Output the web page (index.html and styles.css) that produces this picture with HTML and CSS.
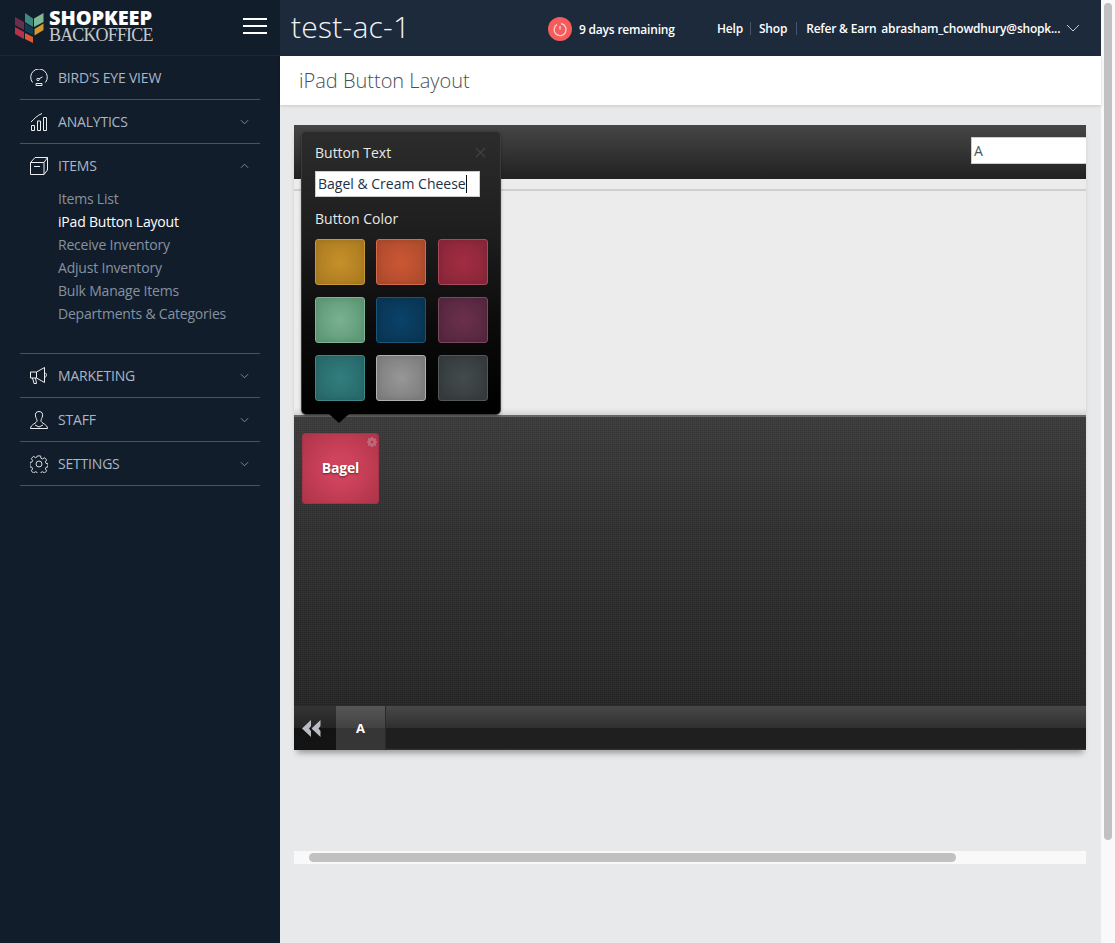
FILE: index.html
```html
<!DOCTYPE html>
<html lang="en">
<head>
<meta charset="utf-8">
<title>iPad Button Layout</title>
<link rel="stylesheet" href="styles.css">
</head>
<body>
<div class="app">
  <aside class="sidebar">
    <div class="brand">
      <svg class="brand-mark" viewBox="0 0 29 31" width="29" height="31">
        <path d="M10 1L18 6.500V15L10 10z" fill="#3f8a80"/>
        <path d="M19 6.500L28.500 1V10L19 15z" fill="#7fb894"/>
        <path d="M0 5L9 10V18L0 13z" fill="#6b2f4c"/>
        <path d="M19.500 17L28.500 11.500V18L19.500 23.500z" fill="#d2982b"/>
        <path d="M0 15L9 20V27L0 22z" fill="#b8314a"/>
        <path d="M10 21L18 25V31L10 27z" fill="#dc5a34"/>
        <path d="M10 11L18 16.500V23L10 19z" fill="#123a55"/>
      </svg>
      <div class="brand-text">
        <span class="brand-top">SHOPKEEP</span>
        <span class="brand-bottom">BACKOFFICE</span>
      </div>
      <div class="burger"><i></i><i></i><i></i></div>
    </div>
    <nav class="nav">
      <div class="nav-item">
        <svg class="nav-icon" viewBox="0 0 18 18"><path d="M2.600 13.500A8.300 8.300 0 1 1 15.400 13.500M6 14.500h6v2H6zM9 10l3.500-2.200"/><circle cx="8" cy="10.500" r="1.200"/></svg>
        <span class="nav-label">BIRD'S EYE VIEW</span>
      </div>
      <div class="nav-item">
        <svg class="nav-icon" viewBox="0 0 18 18"><path d="M1.500 12.500h3v5h-3zM7.500 8h3v9.500h-3zM13.500 4.500h3v13h-3zM1 9C4 6 7 2.500 12 .5"/></svg>
        <span class="nav-label">ANALYTICS</span>
        <svg class="chev" viewBox="0 0 10 6"><path d="M1 1l4 4 4-4"/></svg>
      </div>
      <div class="nav-item nav-open">
        <svg class="nav-icon" viewBox="0 0 18 18"><path d="M.5 5.500H14V17.500H.5zM.5 5.500L5 .5H17.500V13L14 17.500M14 5.500L17.500 .5M4 9.500h6"/></svg>
        <span class="nav-label">ITEMS</span>
        <svg class="chev" viewBox="0 0 10 6"><path d="M1 5l4-4 4 4"/></svg>
      </div>
      <ul class="subnav">
        <li>Items List</li>
        <li class="current">iPad Button Layout</li>
        <li>Receive Inventory</li>
        <li>Adjust Inventory</li>
        <li>Bulk Manage Items</li>
        <li>Departments &amp; Categories</li>
      </ul>
      <div class="nav-item">
        <svg class="nav-icon" viewBox="0 0 18 18"><path d="M.5 5h6L14.500 .5v15L6.500 11h-6zM6.500 5v6M14.500 5.500c2.500 .5 2.500 4.500 0 5M2.500 11l1.500 5.500h2.500L5.500 11"/></svg>
        <span class="nav-label">MARKETING</span>
        <svg class="chev" viewBox="0 0 10 6"><path d="M1 1l4 4 4-4"/></svg>
      </div>
      <div class="nav-item">
        <svg class="nav-icon" viewBox="0 0 18 18"><path d="M9 .5C6 .5 5 2.500 5.500 5 5.800 7 7 8 7 9.800c0 2.500-6.500 3.500-6.500 7.700h17c0-4.200-6.500-5.200-6.500-7.700 0-1.800 1.200-2.800 1.500-4.800C13 2.500 12 .5 9 .5zM5 14l4 2 4-2"/></svg>
        <span class="nav-label">STAFF</span>
        <svg class="chev" viewBox="0 0 10 6"><path d="M1 1l4 4 4-4"/></svg>
      </div>
      <div class="nav-item">
        <svg class="nav-icon" viewBox="0 0 20 20"><path d="M8.300 1h3.400l.5 2.600 1.700.8 2.300-1.400 2.300 2.500-1.400 2.200.7 1.600 2.200.5v3.400l-2.200.5-.7 1.700 1.400 2.200-2.300 2.400-2.300-1.400-1.700.7-.5 2.200H8.300l-.5-2.200-1.700-.7-2.300 1.400-2.300-2.400 1.400-2.200-.7-1.700-2.200-.5V8.300l2.200-.5.7-1.600-1.400-2.200 2.300-2.500 2.300 1.400 1.700-.8z"/><circle cx="10" cy="10" r="3.300"/></svg>
        <span class="nav-label">SETTINGS</span>
        <svg class="chev" viewBox="0 0 10 6"><path d="M1 1l4 4 4-4"/></svg>
      </div>
    </nav>
  </aside>

  <div class="main">
    <header class="topbar">
      <h1 class="store">test-ac-1</h1>
      <div class="trial">
        <svg class="trial-icon" viewBox="0 0 24 24" width="24" height="24"><circle cx="12" cy="12" r="12" fill="#f65c5c"/><path d="M9 7.500a6 6 0 1 0 4-.8M12 9v3.500" fill="none" stroke="#fbd5d5" stroke-width="1.300"/></svg>
        <span>9 days remaining</span>
      </div>
      <div class="links">
        <a>Help</a><span class="pipe"></span><a>Shop</a><span class="pipe pipe-wide"></span><a>Refer &amp; Earn</a>
        <a class="account">abrasham_chowdhury@shopk...</a>
        <svg class="account-chev" viewBox="0 0 14 8"><path d="M1 1l6 6 6-6"/></svg>
      </div>
    </header>
    <div class="page-title"><h2>iPad Button Layout</h2></div>
    <div class="content">
      <section class="editor">
        <div class="toolbar"><input class="name-field" value="A" readonly></div>
        <div class="shelf"><div class="shelf-line"></div></div>
        <div class="board">
          <div class="tile">
            <span>Bagel</span>
            <svg class="tile-gear" viewBox="0 0 12 12"><path d="M5 0h2l.3 1.500 1.100.5L9.700 1.200l1.400 1.400-.8 1.300.5 1.100L12 5v2l-1.200.3-.5 1.100.8 1.300-1.400 1.400-1.300-.8-1.100.5L7 12H5l-.3-1.200-1.100-.5-1.300.8L.9 9.700l.8-1.300-.5-1.100L0 7V5l1.200-.3.5-1.100-.8-1.300 1.400-1.400 1.300.8 1.100-.5z"/><circle cx="6" cy="6" r="1.800" class="gear-hole"/></svg>
          </div>
        </div>
        <div class="tabs">
          <div class="tab-back">
            <svg viewBox="0 0 19 17" width="19" height="17"><path d="M9 0v6L7 8.500l2 2.500v6L0 8.500zM18.500 0v6l-2 2.500 2 2.500v6L9.500 8.500z" fill="#b9bcc0"/></svg>
          </div>
          <div class="tab">A</div>
        </div>
        <div class="popover">
          <svg class="pop-close" viewBox="0 0 12 12"><path d="M1 1l10 10M11 1L1 11"/></svg>
          <label class="pop-label">Button Text</label>
          <div class="pop-input">Bagel &amp; Cream Cheese<i class="caret"></i></div>
          <label class="pop-label pop-label-color">Button Color</label>
          <div class="swatches">
            <div class="swatch s-gold"></div>
            <div class="swatch s-orange"></div>
            <div class="swatch s-red"></div>
            <div class="swatch s-green"></div>
            <div class="swatch s-navy"></div>
            <div class="swatch s-plum"></div>
            <div class="swatch s-teal"></div>
            <div class="swatch s-grey"></div>
            <div class="swatch s-slate"></div>
          </div>
        </div>
      </section>
      <div class="hscroll"><div class="hthumb"></div></div>
    </div>
  </div>
  <div class="vscroll"><div class="vthumb"></div></div>
</div>
</body>
</html>
```

FILE: styles.css
```css
* { box-sizing: border-box; }
html, body { margin: 0; height: 100%; overflow: hidden; }
body { font-family: "Open Sans", sans-serif; background: #e8e9eb; }
.app { display: flex; height: 943px; width: 1115px; overflow: hidden; }

.sidebar { width: 280px; flex: none; background: #121d2b; }
.brand { height: 56px; display: flex; align-items: center; padding: 0 13px 0 15px; border-bottom: 1px solid #1c2835; }
.brand-mark { flex: none; margin-right: 5px; }
.brand-text { display: flex; flex-direction: column; gap: 2px; width: 110px; margin-bottom: 3px; }
.brand-top { font-weight: 800; font-size: 20px; line-height: 16px; color: #fff; letter-spacing: -.1px; }
.brand-bottom { font-family: "Liberation Serif", serif; font-size: 18px; line-height: 15px; color: #c3c8cc; letter-spacing: -.85px; }
.burger { margin-left: auto; margin-bottom: 3px; width: 24px; display: flex; flex-direction: column; gap: 5px; }
.burger i { display: block; height: 2px; background: #fff; }

.nav { padding: 0 20px; }
.nav-item { height: 44px; display: flex; align-items: center; padding: 0 10px; border-bottom: 1px solid #4a5360; color: #a9b6c6; font-size: 14px; letter-spacing: -.2px; }
.nav-open { border-bottom-color: transparent; }
.nav-icon { width: 18px; height: 18px; flex: none; margin-right: 10px; fill: none; stroke: #eceef0; stroke-width: 1; }
.nav-label { flex: 1; }
.chev { width: 9px; height: 6px; flex: none; margin-right: 1px; fill: none; stroke: #8b95a1; stroke-width: 1; }
.subnav { list-style: none; margin: -1px 0 0; padding: 0 0 28px 38px; border-bottom: 1px solid #4a5360; color: #8492a2; font-size: 14px; line-height: 23px; letter-spacing: -.2px; }
.subnav .current { color: #fff; }

.main { width: 821px; flex: none; display: flex; flex-direction: column; }
.topbar { height: 56px; flex: none; background: #1c2a3b; display: flex; align-items: center; color: #fff; font-size: 12px; font-weight: 600; }
.store { margin: 0 0 3px 11px; width: 257px; font-size: 30px; font-weight: 300; letter-spacing: .25px; color: #f3f4f5; }
.trial { display: flex; align-items: center; gap: 7px; width: 169px; padding-top: 2px; letter-spacing: -.2px; }
.trial-icon { flex: none; }
.links { display: flex; align-items: center; flex: 1; letter-spacing: -.2px; }
.pipe { display: block; width: 1px; height: 13px; background: #46566a; margin: 0 8px 0 7px; }
.pipe-wide { margin: 0 9px; }
.account { margin-left: 5px; }
.account-chev { width: 14px; height: 8px; margin-left: 6px; fill: none; stroke: #c4cad1; stroke-width: 1; }

.page-title { height: 49px; flex: none; background: #fff; box-shadow: 0 1px 3px rgba(0,0,0,.14); display: flex; align-items: center; padding-left: 19px; position: relative; }
.page-title h2 { margin: 0; font-size: 20px; font-weight: 300; color: #4a4f55; }

.content { flex: 1; padding: 20px 15px 0 14px; }
.editor { position: relative; width: 792px; box-shadow: 0 6px 6px -3px rgba(0,0,0,.35); }
.toolbar { height: 54px; background: linear-gradient(#464646, #212121); display: flex; align-items: center; justify-content: flex-end; padding-bottom: 4px; }
.name-field { width: 115px; height: 27px; border: 1px solid #ccc; border-right: 0; padding: 0 2px; font: 14px "Open Sans", sans-serif; color: #4a5560; background: #fff; outline: 0; }
.shelf { height: 236px; background: linear-gradient(#ececec 97%, #d4d4d4); padding-top: 10px; }
.shelf-line { height: 2px; background: #cfcfcf; }
.board { height: 291px; padding: 16px 0 0 8px; border-top: 2px solid #666; background-color: #2e2e2e; background-image: linear-gradient(rgba(255,255,255,.07), rgba(255,255,255,.02) 40%, rgba(0,0,0,.12)), repeating-linear-gradient(0deg, rgba(255,255,255,.025) 0 1px, transparent 1px 2px), repeating-linear-gradient(90deg, rgba(0,0,0,.1) 0 1px, transparent 1px 2px); }
.tile { position: relative; width: 77px; height: 71px; border-radius: 3px; border: 1px solid #a33349; background: radial-gradient(circle, #d0435c 25%, #ad3449 100%); display: flex; align-items: center; justify-content: center; padding-bottom: 2px; color: #fff; font-size: 14px; font-weight: 700; letter-spacing: -.2px; text-shadow: 0 1px 2px rgba(0,0,0,.5); }
.tile-gear { position: absolute; top: 3px; right: 1px; width: 10px; height: 10px; fill: #bf6a79; }
.gear-hole { fill: #b53b50; }
.tabs { height: 44px; display: flex; background: linear-gradient(#484848, #2f2f2f 50%, #1f1f1f 50%, #1f1f1f 96%, #3a3a3a); }
.tab-back { width: 42px; display: flex; align-items: center; justify-content: center; padding-right: 7px; background: linear-gradient(#343434, #242424 50%, #121212 50%, #141414); }
.tab { width: 50px; display: flex; align-items: center; justify-content: center; color: #fff; font-size: 13px; font-weight: 700; border-right: 1px solid #2a2a2a; background: linear-gradient(#565656, #424242 50%, #363636 50%, #363636); }

.popover { position: absolute; left: 7px; top: 6px; width: 200px; height: 284px; padding: 11px 13px; border-radius: 5px; border: 1px solid #3b3b3b; background: linear-gradient(#2c2c2c, #1e1e1e 35%, #0a0a0a 70%, #000); color: #e8e8e8; font-size: 14px; box-shadow: 0 1px 3px rgba(0,0,0,.35); }
.popover::after { content: ""; position: absolute; left: 27px; bottom: -9px; border: 10px solid transparent; border-bottom: 0; border-top: 9px solid #000; }
.pop-close { position: absolute; top: 15px; right: 14px; width: 11px; height: 11px; fill: none; stroke: #444; stroke-width: 1.400; }
.pop-label { display: block; line-height: 19px; }
.pop-input { margin-top: 9px; width: 165px; height: 26px; border: 1px solid #ccc; background: #fff; color: #1b3147; padding: 0 2px; line-height: 24px; font-size: 14px; white-space: nowrap; }
.caret { display: inline-block; width: 1px; height: 18px; background: #111; vertical-align: -4px; }
.pop-label-color { margin-top: 12px; }
.swatches { margin-top: 11px; display: grid; grid-template-columns: repeat(3, 50px); grid-auto-rows: 46px; column-gap: 11.400px; row-gap: 12px; }
.swatch { border-radius: 3px; border: 1px solid; box-shadow: inset 0 0 5px rgba(0,0,0,.12); }
.s-gold { background: radial-gradient(circle, #c6902a, #ae7d22 80%); border-color: #c69a34; }
.s-orange { background: radial-gradient(circle, #cc5733, #b04c2e 80%); border-color: #d46b4c; }
.s-red { background: radial-gradient(circle, #a32c42, #8b273a 80%); border-color: #a84a5a; }
.s-green { background: radial-gradient(circle, #7ab290, #5f9a78 80%); border-color: #7fb495; }
.s-navy { background: radial-gradient(circle, #0a4269, #093655 80%); border-color: #1c5478; }
.s-plum { background: radial-gradient(circle, #6b304c, #572740 80%); border-color: #7a4a60; }
.s-teal { background: radial-gradient(circle, #317e7f, #296a6b 80%); border-color: #3f8889; }
.s-grey { background: radial-gradient(circle, #979797, #7f7f7f 80%); border-color: #b1b1b1; }
.s-slate { background: radial-gradient(circle, #434b4d, #363c3e 80%); border-color: #50585a; }

.hscroll { margin-top: 101px; height: 13px; width: 792px; background: #f9f9f9; padding: 2px 130px 2px 15px; }
.hthumb { height: 9px; border-radius: 5px; background: #c1c1c1; }

.vscroll { width: 14px; flex: none; background: #f9f9f9; padding: 3px 3px 0; }
.vthumb { width: 8px; height: 837px; border-radius: 4px; background: #c1c1c1; }
```
